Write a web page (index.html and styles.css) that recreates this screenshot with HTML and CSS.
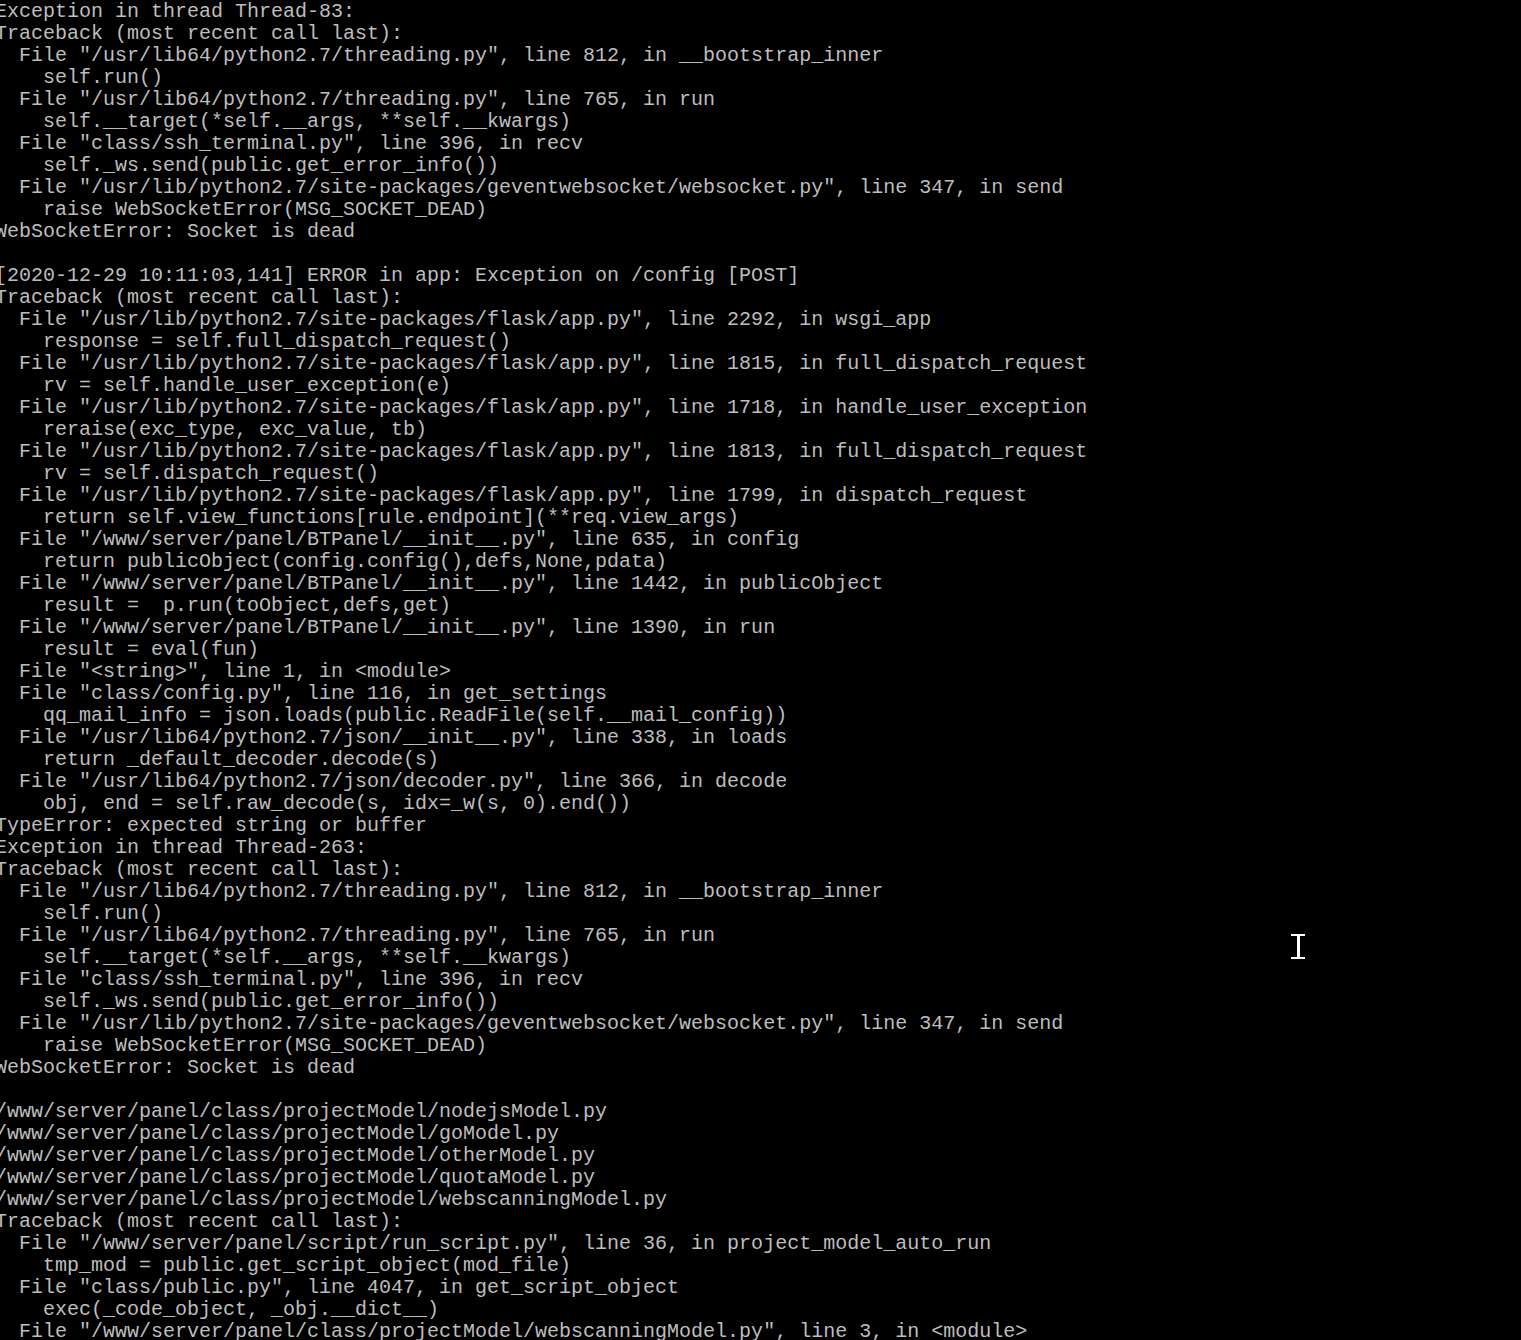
FILE: index.html
```html
<!DOCTYPE html>
<html lang="en">
<head>
  <meta charset="UTF-8">
  <meta name="viewport" content="width=device-width, initial-scale=1.0">
  <title>Terminal</title>
  <link rel="stylesheet" href="styles.css">
</head>
<body>

<div class="terminal">
<pre class="output">Exception in thread Thread-83:
Traceback (most recent call last):
  File "/usr/lib64/python2.7/threading.py", line 812, in __bootstrap_inner
    self.run()
  File "/usr/lib64/python2.7/threading.py", line 765, in run
    self.__target(*self.__args, **self.__kwargs)
  File "class/ssh_terminal.py", line 396, in recv
    self._ws.send(public.get_error_info())
  File "/usr/lib/python2.7/site-packages/geventwebsocket/websocket.py", line 347, in send
    raise WebSocketError(MSG_SOCKET_DEAD)
WebSocketError: Socket is dead

[2020-12-29 10:11:03,141] ERROR in app: Exception on /config [POST]
Traceback (most recent call last):
  File "/usr/lib/python2.7/site-packages/flask/app.py", line 2292, in wsgi_app
    response = self.full_dispatch_request()
  File "/usr/lib/python2.7/site-packages/flask/app.py", line 1815, in full_dispatch_request
    rv = self.handle_user_exception(e)
  File "/usr/lib/python2.7/site-packages/flask/app.py", line 1718, in handle_user_exception
    reraise(exc_type, exc_value, tb)
  File "/usr/lib/python2.7/site-packages/flask/app.py", line 1813, in full_dispatch_request
    rv = self.dispatch_request()
  File "/usr/lib/python2.7/site-packages/flask/app.py", line 1799, in dispatch_request
    return self.view_functions[rule.endpoint](**req.view_args)
  File "/www/server/panel/BTPanel/__init__.py", line 635, in config
    return publicObject(config.config(),defs,None,pdata)
  File "/www/server/panel/BTPanel/__init__.py", line 1442, in publicObject
    result =  p.run(toObject,defs,get)
  File "/www/server/panel/BTPanel/__init__.py", line 1390, in run
    result = eval(fun)
  File "&lt;string&gt;", line 1, in &lt;module&gt;
  File "class/config.py", line 116, in get_settings
    qq_mail_info = json.loads(public.ReadFile(self.__mail_config))
  File "/usr/lib64/python2.7/json/__init__.py", line 338, in loads
    return _default_decoder.decode(s)
  File "/usr/lib64/python2.7/json/decoder.py", line 366, in decode
    obj, end = self.raw_decode(s, idx=_w(s, 0).end())
TypeError: expected string or buffer
Exception in thread Thread-263:
Traceback (most recent call last):
  File "/usr/lib64/python2.7/threading.py", line 812, in __bootstrap_inner
    self.run()
  File "/usr/lib64/python2.7/threading.py", line 765, in run
    self.__target(*self.__args, **self.__kwargs)
  File "class/ssh_terminal.py", line 396, in recv
    self._ws.send(public.get_error_info())
  File "/usr/lib/python2.7/site-packages/geventwebsocket/websocket.py", line 347, in send
    raise WebSocketError(MSG_SOCKET_DEAD)
WebSocketError: Socket is dead

/www/server/panel/class/projectModel/nodejsModel.py
/www/server/panel/class/projectModel/goModel.py
/www/server/panel/class/projectModel/otherModel.py
/www/server/panel/class/projectModel/quotaModel.py
/www/server/panel/class/projectModel/webscanningModel.py
Traceback (most recent call last):
  File "/www/server/panel/script/run_script.py", line 36, in project_model_auto_run
    tmp_mod = public.get_script_object(mod_file)
  File "class/public.py", line 4047, in get_script_object
    exec(_code_object, _obj.__dict__)
  File "/www/server/panel/class/projectModel/webscanningModel.py", line 3, in &lt;module&gt;</pre>

  <!-- mouse pointer over the terminal -->
  <svg class="ibeam" width="16" height="28" viewBox="0 0 16 28">
    <rect x="0" y="0" width="14" height="2" fill="#fff"/>
    <rect x="6" y="0" width="3" height="25" fill="#fff"/>
    <rect x="0" y="23" width="14" height="2" fill="#fff"/>
  </svg>
</div>

</body>
</html>
```

FILE: styles.css
```css
body {
  margin: 0;
  padding: 0;
  background: #000;
  overflow: hidden;
}

.terminal {
  position: relative;
  width: 1521px;
  height: 1340px;
  background: #000;
  overflow: hidden;
}

.output {
  margin: 0 0 0 -5px;
  padding-top: 1px;
  font-family: "Liberation Mono", "Courier New", monospace;
  font-size: 20px;
  line-height: 22px;
  color: #bdbdbd;
  white-space: pre;
}

.ibeam {
  position: absolute;
  left: 1291px;
  top: 934px;
}
```
